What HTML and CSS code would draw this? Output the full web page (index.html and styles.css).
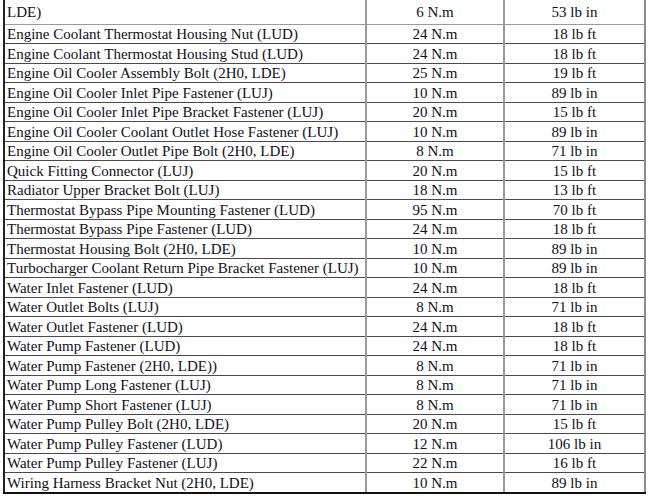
FILE: index.html
```html
<!DOCTYPE html>
<html>
<head>
<meta charset="utf-8">
<link rel="stylesheet" href="styles.css">
</head>
<body>
<table class="spec">
<colgroup><col class="c-name"><col class="c-metric"><col class="c-imp"></colgroup>
<tbody>
<tr class="first"><td>LDE)</td><td>6 N.m</td><td>53 lb in</td></tr>
<tr class="a"><td>Engine Coolant Thermostat Housing Nut (LUD)</td><td>24 N.m</td><td>18 lb ft</td></tr>
<tr class="b"><td>Engine Coolant Thermostat Housing Stud (LUD)</td><td>24 N.m</td><td>18 lb ft</td></tr>
<tr class="a"><td>Engine Oil Cooler Assembly Bolt (2H0, LDE)</td><td>25 N.m</td><td>19 lb ft</td></tr>
<tr class="b"><td>Engine Oil Cooler Inlet Pipe Fastener (LUJ)</td><td>10 N.m</td><td>89 lb in</td></tr>
<tr class="a"><td>Engine Oil Cooler Inlet Pipe Bracket Fastener (LUJ)</td><td>20 N.m</td><td>15 lb ft</td></tr>
<tr class="b"><td>Engine Oil Cooler Coolant Outlet Hose Fastener (LUJ)</td><td>10 N.m</td><td>89 lb in</td></tr>
<tr class="a"><td>Engine Oil Cooler Outlet Pipe Bolt (2H0, LDE)</td><td>8 N.m</td><td>71 lb in</td></tr>
<tr class="b"><td>Quick Fitting Connector (LUJ)</td><td>20 N.m</td><td>15 lb ft</td></tr>
<tr class="a"><td>Radiator Upper Bracket Bolt (LUJ)</td><td>18 N.m</td><td>13 lb ft</td></tr>
<tr class="b"><td>Thermostat Bypass Pipe Mounting Fastener (LUD)</td><td>95 N.m</td><td>70 lb ft</td></tr>
<tr class="a"><td>Thermostat Bypass Pipe Fastener (LUD)</td><td>24 N.m</td><td>18 lb ft</td></tr>
<tr class="b"><td>Thermostat Housing Bolt (2H0, LDE)</td><td>10 N.m</td><td>89 lb in</td></tr>
<tr class="a"><td>Turbocharger Coolant Return Pipe Bracket Fastener (LUJ)</td><td>10 N.m</td><td>89 lb in</td></tr>
<tr class="b"><td>Water Inlet Fastener (LUD)</td><td>24 N.m</td><td>18 lb ft</td></tr>
<tr class="a"><td>Water Outlet Bolts (LUJ)</td><td>8 N.m</td><td>71 lb in</td></tr>
<tr class="b"><td>Water Outlet Fastener (LUD)</td><td>24 N.m</td><td>18 lb ft</td></tr>
<tr class="a"><td>Water Pump Fastener (LUD)</td><td>24 N.m</td><td>18 lb ft</td></tr>
<tr class="b"><td>Water Pump Fastener (2H0, LDE))</td><td>8 N.m</td><td>71 lb in</td></tr>
<tr class="a"><td>Water Pump Long Fastener (LUJ)</td><td>8 N.m</td><td>71 lb in</td></tr>
<tr class="b"><td>Water Pump Short Fastener (LUJ)</td><td>8 N.m</td><td>71 lb in</td></tr>
<tr class="a"><td>Water Pump Pulley Bolt (2H0, LDE)</td><td>20 N.m</td><td>15 lb ft</td></tr>
<tr class="b"><td>Water Pump Pulley Fastener (LUD)</td><td>12 N.m</td><td>106 lb in</td></tr>
<tr class="a"><td>Water Pump Pulley Fastener (LUJ)</td><td>22 N.m</td><td>16 lb ft</td></tr>
<tr class="b last"><td>Wiring Harness Bracket Nut (2H0, LDE)</td><td>10 N.m</td><td>89 lb in</td></tr>
</tbody>
</table>
</body>
</html>
```
FILE: styles.css
```css
html, body {
  margin: 0;
  padding: 0;
  background: #ffffff;
}
.spec {
  margin-left: 3px;
  width: 641px;
  border-collapse: collapse;
  table-layout: fixed;
  font-family: "Liberation Serif", "Times New Roman", serif;
  font-size: 15px;
  color: #101018;
  border-left: 2px solid #222;
  border-right: 2px solid #8c8c8c;
  border-bottom: 2px solid #111;
}
.c-name { width: 362px; }
.c-metric { width: 138px; }
.c-imp { width: 141px; }
.spec td {
  padding: 0 0 0 2px;
  line-height: 16px;
  border-bottom: 1px solid #4a4a4a;
  border-left: 2px solid #9a9a9a;
  white-space: nowrap;
  overflow: hidden;
  vertical-align: middle;
}
.spec td:first-child { border-left: 2px solid #222; }
.spec td + td { text-align: center; padding-left: 0; }
.spec tr.first td { height: 24px; border-bottom-color: #9a9a9a; }
.spec tr.a td { height: 18px; }
.spec tr.b td { height: 19px; }
.spec tr.last td { border-bottom: 2px solid #111; }
```
